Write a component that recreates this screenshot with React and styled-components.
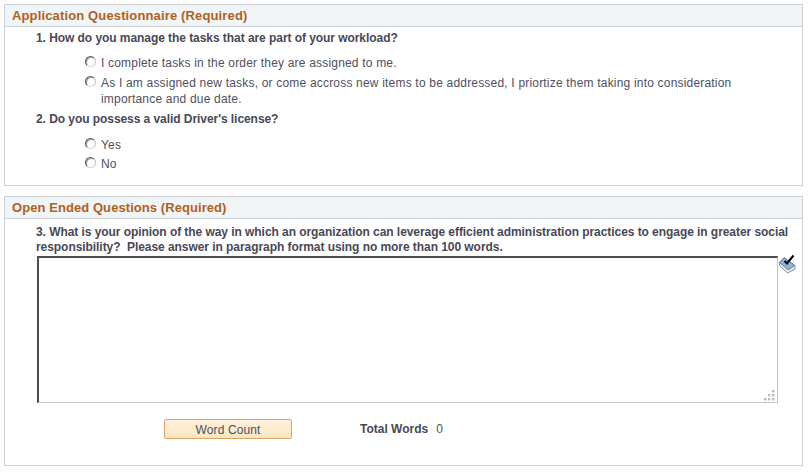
import React from "react";
import styled, { createGlobalStyle } from "styled-components";

const Global = createGlobalStyle`
  html, body {
    margin: 0;
    padding: 0;
    background: #fff;
  }
  body {
    font-family: "Liberation Sans", Arial, sans-serif;
    font-size: 12px;
    color: #444452;
  }
`;

const Page = styled.div`
  width: 810px;
  height: 472px;
  padding: 4px 0 0 4px;
  box-sizing: border-box;
  overflow: hidden;
`;

const Panel = styled.section`
  width: 799px;
  height: ${(p) => p.$height}px;
  margin-bottom: 10px;
  box-sizing: border-box;
  border: 1px solid #cbd0d5;
`;

const PanelHeader = styled.h2`
  margin: 0;
  height: 22px;
  box-sizing: border-box;
  padding-left: 7px;
  background: #f2f5f5;
  border-bottom: 1px solid #cbd0d5;
  color: #b0601f;
  font-size: 13px;
  font-weight: bold;
  letter-spacing: ${(p) => p.$spacing}px;
  line-height: 21px;
`;

const Question = styled.div`
  width: 760px;
  margin: ${(p) => p.$top}px 0 0 31px;
  font-weight: bold;
  letter-spacing: -0.06px;
  line-height: 15px;
  color: #484856;
`;

const Options = styled.div`
  display: flex;
  flex-direction: column;
  margin: ${(p) => p.$top}px 0 0 80px;
`;

const Option = styled.label`
  display: flex;
  gap: 5px;
  width: 650px;
  margin-bottom: ${(p) => p.$gap}px;
  letter-spacing: 0.19px;
  line-height: 16px;
  color: #50505e;
`;

const Radio = styled.span`
  flex: none;
  width: 9px;
  height: 9px;
  margin-top: 1px;
  border-radius: 50%;
  border: 1px solid;
  border-color: #5c5c5c #c4c4c0 #d8d8d4 #5c5c5c;
  box-shadow: inset 1px 1px 0 #9a9a9a;
  background: #fff;
`;

const EditorRow = styled.div`
  position: relative;
  display: flex;
  align-items: flex-start;
  margin: 1px 0 0 32px;
`;

const Editor = styled.textarea`
  display: block;
  width: 741px;
  height: 147px;
  box-sizing: border-box;
  margin: 0;
  padding: 2px;
  resize: none;
  background: #fff;
  border-style: solid;
  border-width: 2px 1px 1px 2px;
  border-color: #4c4c4c #c9c7bf #c9c7bf #4c4c4c;
  outline: none;
`;

const Grip = styled.svg`
  position: absolute;
  left: 727px;
  top: 134px;
`;

const SpellIcon = styled.svg`
  flex: none;
  margin: -2px 0 0 1px;
`;

const Footer = styled.div`
  display: flex;
  align-items: center;
  margin: 16px 0 0 159px;
`;

const Button = styled.button`
  width: 128px;
  height: 20px;
  padding: 1px 0 0;
  box-sizing: border-box;
  border: 1px solid #dda468;
  border-radius: 2px;
  background: linear-gradient(#fdf1db, #fbe6c3);
  color: #50505e;
  font-family: inherit;
  font-size: 12px;
  letter-spacing: 0.1px;
`;

const TotalLabel = styled.span`
  margin-left: 68px;
  font-weight: bold;
  color: #484856;
`;

const TotalValue = styled.span`
  margin-left: 8px;
  color: #50505e;
`;

function GripDots() {
  const dots = [
    [8, 0],
    [4, 4],
    [8, 4],
    [0, 8],
    [4, 8],
    [8, 8],
  ];
  return (
    <Grip width="11" height="11" viewBox="0 0 11 11">
      {dots.map(([x, y]) => (
        <rect key={`${x}-${y}`} x={x} y={y} width="2.4" height="2.4" fill="#b4c0bf" />
      ))}
    </Grip>
  );
}

function BookCheck() {
  return (
    <SpellIcon width="17" height="20" viewBox="0 0 17 20">
      <path d="M0.5 8.5 L5 3.5 L16 11.5 L9 16 Z" fill="#8fb0d8" stroke="#56789f" strokeWidth="1" />
      <path d="M0.5 8.5 L0.5 11.5 L8.5 19 L16 15 L16 11.5 L9 16 Z" fill="#eef1f4" stroke="#7d8da0" strokeWidth="1" />
      <path d="M5.5 7 L8 9.5 L14.5 1.5" fill="none" stroke="#000" strokeWidth="2" />
    </SpellIcon>
  );
}

export default function App() {
  return (
    <Page>
      <Global />
      <Panel $height={182}>
        <PanelHeader $spacing={0.14}>Application Questionnaire (Required)</PanelHeader>
        <Question $top={4}>1. How do you manage the tasks that are part of your workload?</Question>
        <Options $top={9}>
          <Option $gap={4}>
            <Radio />I complete tasks in the order they are assigned to me.
          </Option>
          <Option $gap={5}>
            <Radio />
            <span>
              As I am assigned new tasks, or come accross new items to be addressed, I priortize them taking into consideration importance and due date.
            </span>
          </Option>
        </Options>
        <Question $top={0}>2. Do you possess a valid Driver's license?</Question>
        <Options $top={10}>
          <Option $gap={3}>
            <Radio />Yes
          </Option>
          <Option $gap={0}>
            <Radio />No
          </Option>
        </Options>
      </Panel>
      <Panel $height={270}>
        <PanelHeader $spacing={0.07}>Open Ended Questions (Required)</PanelHeader>
        <Question $top={6}>
          3. What is your opinion of the way in which an organization can leverage efficient administration practices to engage in greater social responsibility?&nbsp; Please answer in paragraph format using no more than 100 words.
        </Question>
        <EditorRow>
          <Editor />
          <GripDots />
          <BookCheck />
        </EditorRow>
        <Footer>
          <Button type="button">Word Count</Button>
          <TotalLabel>Total Words</TotalLabel>
          <TotalValue>0</TotalValue>
        </Footer>
      </Panel>
    </Page>
  );
}
